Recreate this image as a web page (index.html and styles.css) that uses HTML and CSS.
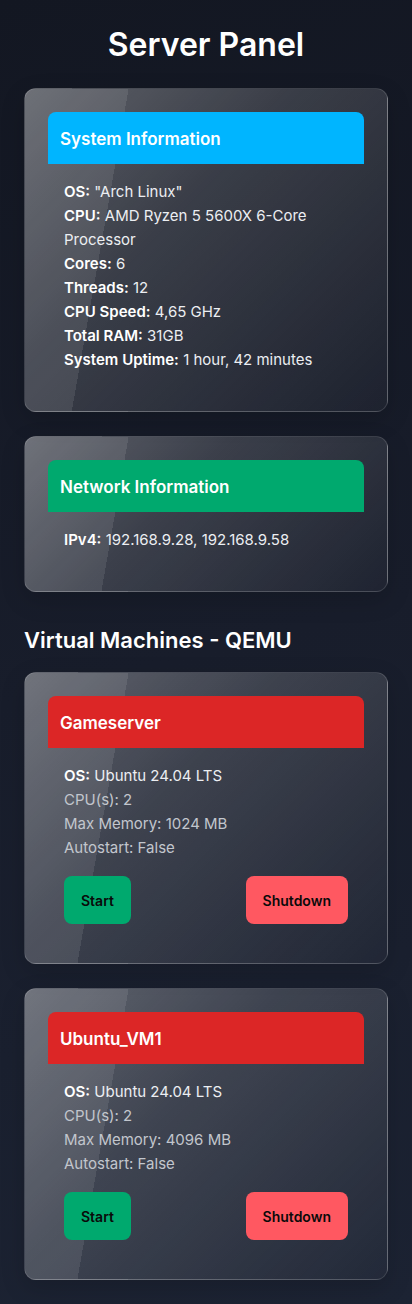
FILE: index.html
```html
<!DOCTYPE html>
<html lang="en">
<head>
<meta charset="utf-8">
<title>Server Panel</title>
<link rel="stylesheet" href="styles.css">
</head>
<body>
<main class="page">
  <h1 class="title">Server Panel</h1>

  <section class="card">
    <h2 class="card-head head-info">System Information</h2>
    <div class="card-body">
      <p class="row"><b>OS:</b> "Arch Linux"</p>
      <p class="row"><b>CPU:</b> AMD Ryzen 5 5600X 6-Core Processor</p>
      <p class="row"><b>Cores:</b> 6</p>
      <p class="row"><b>Threads:</b> 12</p>
      <p class="row"><b>CPU Speed:</b> 4,65 GHz</p>
      <p class="row"><b>Total RAM:</b> 31GB</p>
      <p class="row"><b>System Uptime:</b> 1 hour, 42 minutes</p>
    </div>
  </section>

  <section class="card">
    <h2 class="card-head head-success">Network Information</h2>
    <div class="card-body">
      <p class="row"><b>IPv4:</b> 192.168.9.28, 192.168.9.58</p>
    </div>
  </section>

  <h2 class="section-title">Virtual Machines - QEMU</h2>

  <section class="card">
    <h3 class="card-head head-error">Gameserver</h3>
    <div class="card-body">
      <p class="row"><b>OS:</b> Ubuntu 24.04 LTS</p>
      <p class="row muted">CPU(s): 2</p>
      <p class="row muted">Max Memory: 1024 MB</p>
      <p class="row muted">Autostart: False</p>
      <div class="actions">
        <button class="btn btn-start">Start</button>
        <button class="btn btn-stop">Shutdown</button>
      </div>
    </div>
  </section>

  <section class="card">
    <h3 class="card-head head-error">Ubuntu_VM1</h3>
    <div class="card-body">
      <p class="row"><b>OS:</b> Ubuntu 24.04 LTS</p>
      <p class="row muted">CPU(s): 2</p>
      <p class="row muted">Max Memory: 4096 MB</p>
      <p class="row muted">Autostart: False</p>
      <div class="actions">
        <button class="btn btn-start">Start</button>
        <button class="btn btn-stop">Shutdown</button>
      </div>
    </div>
  </section>
</main>
</body>
</html>
```

FILE: styles.css
```css
* { box-sizing: border-box; }

html, body {
  margin: 0;
  padding: 0;
}

body {
  min-height: 1304px;
  background: linear-gradient(165deg, #131722 0%, #181d2b 50%, #1c2333 100%);
  font-family: Inter, "Noto Sans", "Liberation Sans", sans-serif;
  color: #e8eaee;
}

.page {
  padding: 25px 24px 24px;
}

.title {
  margin: 0 0 23px;
  font-size: 32px;
  line-height: 40px;
  font-weight: 600;
  text-align: center;
  color: #ffffff;
}

.card {
  margin: 0 0 24px;
  padding: 23px;
  border: 1px solid rgba(255, 255, 255, 0.13);
  border-radius: 12px;
  background:
    linear-gradient(100deg, rgba(255, 255, 255, 0.09) 102px, rgba(255, 255, 255, 0) 102px),
    linear-gradient(135deg, rgba(255, 255, 255, 0.32) 0%, rgba(255, 255, 255, 0.16) 40%, rgba(255, 255, 255, 0.03) 100%);
  box-shadow: 0 8px 24px rgba(0, 0, 0, 0.15);
}

.card:last-child { margin-bottom: 0; }

.card-head {
  margin: 0;
  padding: 15px 12px 13px;
  font-size: 17px;
  line-height: 24px;
  font-weight: 600;
  color: #ffffff;
  border-radius: 8px 8px 0 0;
}

.head-info { background: #00b5ff; }
.head-success { background: #00a96e; }
.head-error { background: #dc2626; }

.card-body {
  padding: 16px;
}

.row {
  margin: 0;
  font-size: 15px;
  line-height: 24px;
  color: #eceef2;
}

.row b {
  font-weight: 600;
  color: #ffffff;
}

.muted {
  color: #c2c6cd;
}

.section-title {
  margin: 32px 0 16px;
  font-size: 22px;
  line-height: 32px;
  font-weight: 600;
  color: #ffffff;
}

.actions {
  display: flex;
  justify-content: space-between;
  margin-top: 16px;
}

.btn {
  height: 48px;
  padding: 0 17px;
  border: none;
  border-radius: 8px;
  font-family: inherit;
  font-size: 14px;
  font-weight: 600;
  color: #0a0a0a;
  cursor: pointer;
}

.btn-start { background: #00a96e; }
.btn-stop { background: #ff5861; }
```
